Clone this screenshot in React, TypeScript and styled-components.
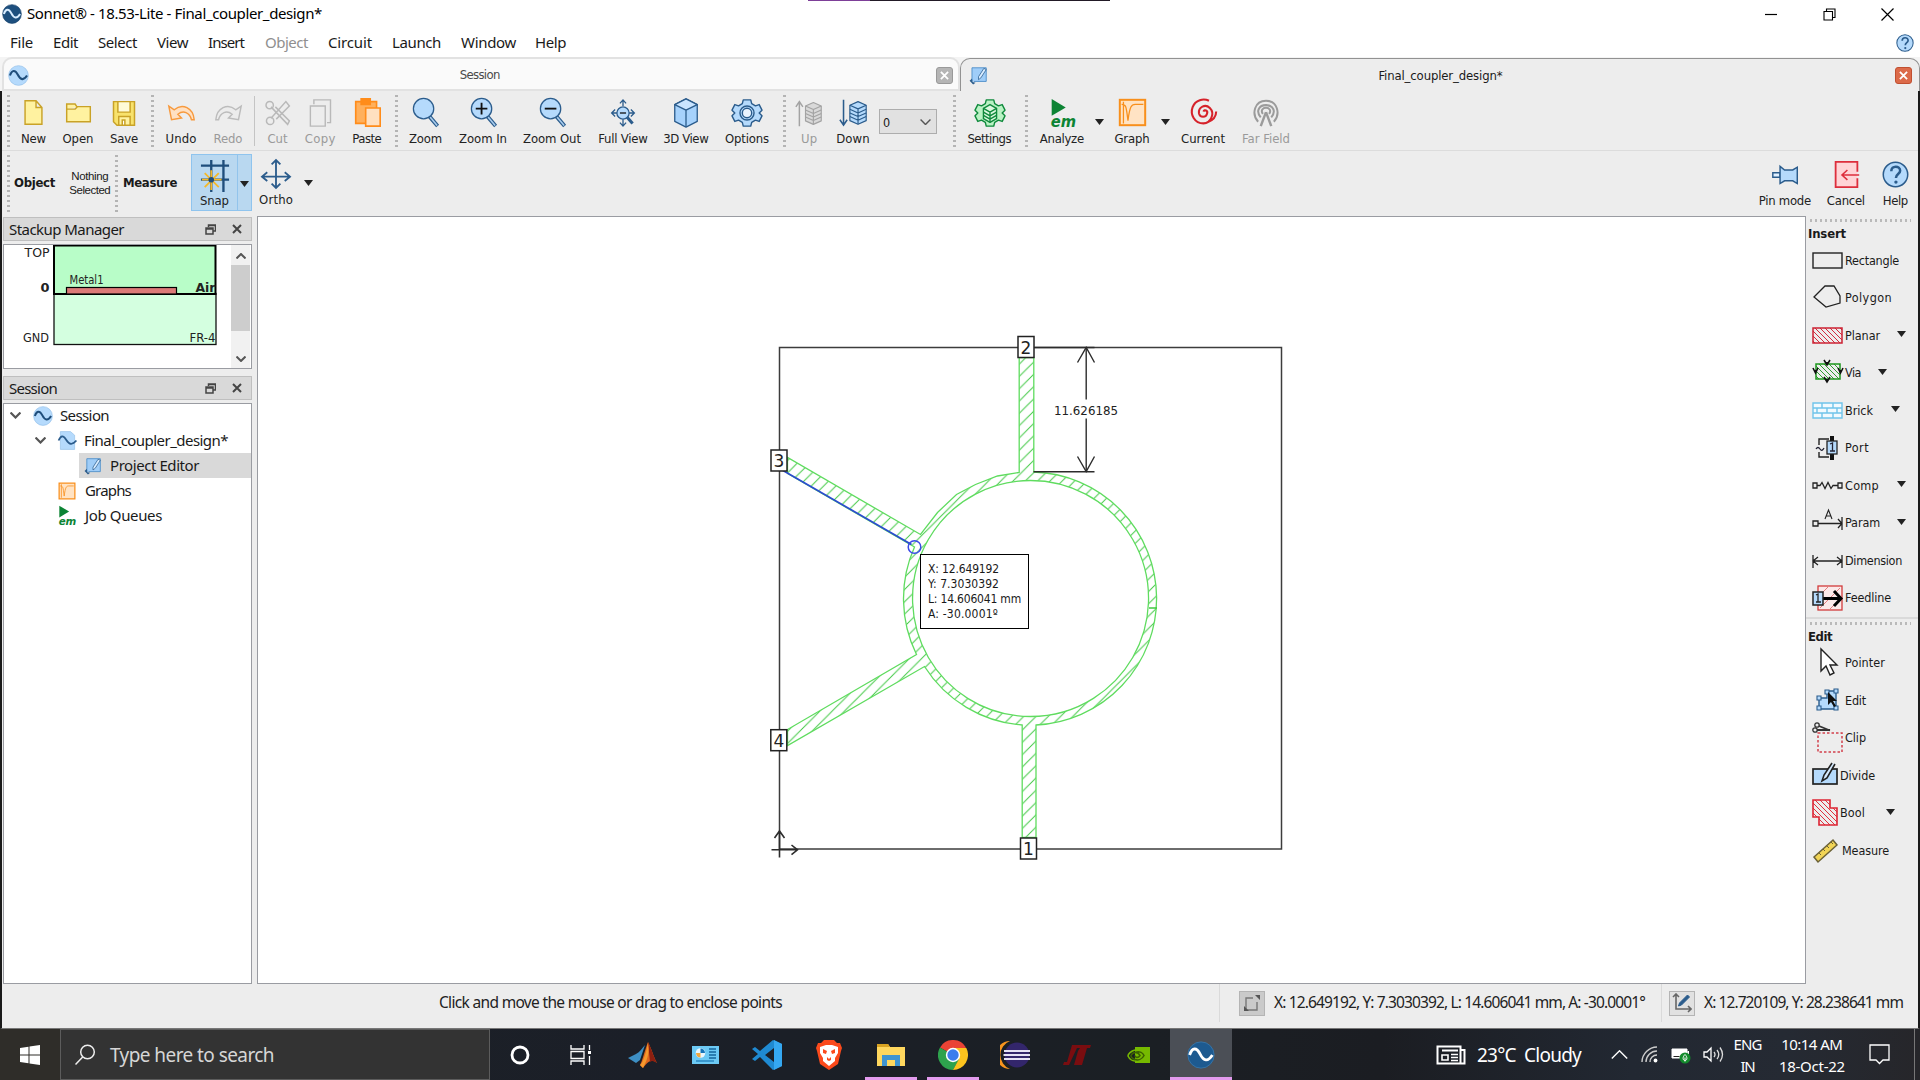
import React, { useLayoutEffect, useRef } from "react";
import styled, { createGlobalStyle, css } from "styled-components";

const UI = `"Noto Sans", "Open Sans", sans-serif`;
const TAHOMA = `"DejaVu Sans Condensed", "Noto Sans", sans-serif`;

const Global = createGlobalStyle`
  * { box-sizing: border-box; }
  html, body { margin: 0; padding: 0; background: #fff; }
  body { font-family: ${UI}; font-size: 15px; color: #1a1a1a; overflow: hidden; }
  svg { display: block; flex: none; }
`;

/* ---------- text ---------- */
const Glyphs = styled.span<{ $size?: number; $bold?: boolean; $color?: string; $font?: string }>`
  display: inline-block;
  white-space: pre;
  line-height: 1.2;
  padding-bottom: 2px;
  font-family: ${(p) => p.$font || UI};
  font-size: ${(p) => p.$size || 14}px;
  font-weight: ${(p) => (p.$bold ? 700 : 400)};
  ${(p) => p.$color && css`color: ${p.$color};`}
`;

type LabelProps = { w?: number; size?: number; bold?: boolean; color?: string; font?: string; children: string };

function Label({ w, size, bold, color, font, children }: LabelProps) {
  const ref = useRef<HTMLSpanElement>(null);
  useLayoutEffect(() => {
    const el = ref.current;
    if (!el || !w) return;
    el.style.letterSpacing = "0px";
    const natural = el.getBoundingClientRect().width;
    const gap = (w - natural) / children.length;
    el.style.letterSpacing = `${gap}px`;
    el.style.marginRight = `${-gap}px`;
  }, [w, children]);
  return (
    <Glyphs ref={ref} $size={size} $bold={bold} $color={color} $font={font}>
      {children}
    </Glyphs>
  );
}

/* ---------- icons ---------- */
const N = "#2b5c8c";
const B = "#b5dafc";
const Y = "#fff2a0";
const YS = "#c9a227";
const G = "#a3a3a3";
const GR = "#0f8a3c";

const gear =
  "M12 2h8l1 4 4 2.4 4-1.4 3 6-3 3 3 3-3 6-4-1.4-4 2.4-1 4h-8l-1-4-4-2.4-4 1.4-3-6 3-3-3-3 3-6 4 1.4 4-2.4z";

const Slabs = ({ s, f }: { s: string; f: string }) => (
  <g stroke={s} strokeWidth="1.3" strokeLinejoin="round">
    <path d="M12 8l9-4 9 4v17l-9 4-9-4z" fill={f} />
    <path d="M12 8l9 4 9-4M21 12v17M12 12.5l9 4 9-4M12 16.5l9 4 9-4M12 20.5l9 4 9-4" fill="none" />
  </g>
);
const Lens = () => (
  <g>
    <path d="M20 20l8.500 10" stroke={N} strokeWidth="4" />
    <path d="M20.500 20.500l7.500 9" stroke="#a9cdee" strokeWidth="1.600" />
    <circle cx="14" cy="12" r="10.500" fill={B} stroke={N} strokeWidth="1.300" />
  </g>
);
const Em = () => (
  <g fill="#0c8434">
    <path d="M5 1l15 9-15 9z" />
    <text x="4" y="31" fontFamily="DejaVu Sans, sans-serif" fontSize="16.500" fontWeight="700" fontStyle="italic" textLength="27" lengthAdjust="spacingAndGlyphs">em</text>
  </g>
);
const Wave = ({ f, s, r }: { f: string; s: string; r: string }) => (
  <g>
    <circle cx="16" cy="16" r="15" fill={f} stroke={r} />
    <path d="M3 16c3-9 8-9 12-1s9 9 14 1" fill="none" stroke={s} strokeWidth="3.200" />
  </g>
);
const Sketch = () => (
  <g>
    <path d="M5 26V3h24v23H8" fill="#9fcdf8" stroke="#4a8cc8" strokeWidth="1.500" />
    <path d="M25 4l4 2-9 14-4 3v-5z" fill="#d8ecff" stroke={N} strokeWidth="1.300" />
    <path d="M1 25l4-4 1 6 5 1-4 3z" fill={N} />
  </g>
);
const GraphIcon = () => (
  <g fill="none" stroke="#f88f1c">
    <rect x="2" y="2" width="28" height="28" fill="#ffe3c4" strokeWidth="2.200" />
    <path d="M4 7c5 0 5 2 7 18 2-16 4-18 8-18h9M6 4v24" strokeWidth="1.400" />
  </g>
);
const Question = () => (
  <g>
    <circle cx="16" cy="16" r="14.500" fill={B} stroke={N} strokeWidth="1.800" />
    <path d="M11 12c0-7 10.500-7 10.500-.5 0 4-5 4-5 8.500" fill="none" stroke={N} strokeWidth="3" />
    <circle cx="16.500" cy="25" r="2" fill={N} />
  </g>
);

const ICONS: Record<string, React.ReactNode> = {
  new: <path d="M6 2h13l7 8v20H6zM19 2v8h7" fill={Y} stroke={YS} strokeWidth="1.700" />,
  open: <path d="M2 27V6h10l2 3h16v18zM2 12h10l3-3" fill={Y} stroke={YS} strokeWidth="1.700" />,
  save: (
    <g stroke={YS} strokeWidth="1.700">
      <path d="M4 3h24v27H8l-4-4z" fill="#f8e26c" />
      <path d="M9 3h14v12H9z" fill="#fffbd8" />
      <path d="M10 30V20h13v10z" fill={Y} />
      <path d="M14 24h3v6h-3z" fill="#fff" />
    </g>
  ),
  undo: <path d="M2 9l3 15 11-2-4-4c6-5 13-2 15 6h3C29 11 17 5 8 13z" fill="#ffe0c2" stroke="#f79a3e" strokeWidth="1.600" />,
  redo: <path d="M30 9l-3 15-11-2 4-4C14 13 7 16 5 24H2C3 11 15 5 24 13z" fill="#ececec" stroke="#bcbcbc" strokeWidth="1.600" />,
  cut: (
    <g fill="none" stroke="#b9b9b9" strokeWidth="1.700">
      <path d="M8 22L25 3l4 5-15 15M8 9l19 20 2-4L13 9" />
      <circle cx="6.500" cy="7" r="4.200" />
      <circle cx="7" cy="25" r="4.200" />
    </g>
  ),
  copy: <path d="M5 8h17v23H5zM9 6V1h19v26h-4" fill="none" stroke="#b9b9b9" strokeWidth="1.600" />,
  paste: (
    <g stroke="#ff8c1a" strokeWidth="1.800">
      <path d="M3 4h23v24H3z" fill="#ffb05c" />
      <path d="M9 1h10v6H9z" fill="#ff8c1a" />
      <path d="M14 11h16v20H14z" fill="#ffe0c0" />
    </g>
  ),
  zoom: <Lens />,
  zoomIn: <g><Lens /><path d="M8 12h12M14 6v12" stroke="#111" strokeWidth="1.900" /></g>,
  zoomOut: <g><Lens /><path d="M8 12h12" stroke="#111" strokeWidth="1.900" /></g>,
  full: (
    <g fill="none" stroke={N} strokeWidth="1.500">
      <path d="M16 1v7M12.500 5L16 1l3.500 4M16 31v-8M12.500 27l3.500 4 3.500-4M3 16h6M7 12l-4 4 4 4M29 16h-6M25 12l4 4-4 4" />
      <path d="M20 20l7 8" strokeWidth="3.500" />
      <circle cx="16" cy="16" r="7" fill={B} />
      <path d="M12.500 16h7" stroke="#111" />
    </g>
  ),
  cube: (
    <g stroke={N} strokeWidth="1.400" strokeLinejoin="round">
      <path d="M4 7l12-6 12 6v18l-12 6-12-6z" fill="#a6d2fc" />
      <path d="M4 7l12-6 12 6-12 6z" fill="#c9e4ff" />
      <path d="M16 13v18" />
    </g>
  ),
  options: (
    <g stroke={N} strokeWidth="1.500">
      <path d={gear} fill={B} strokeLinejoin="round" />
      <circle cx="16" cy="16" r="7.500" fill={B} />
      <circle cx="16" cy="16" r="5" fill="#eaf4ff" />
    </g>
  ),
  up: <g><Slabs s={G} f="#d9d9d9" /><path d="M5 31V3M1 9l4-6 4 6" fill="none" stroke={G} strokeWidth="1.700" /></g>,
  down: <g><Slabs s={N} f={B} /><path d="M5 2v28M1 24l4 6 4-6" fill="none" stroke={N} strokeWidth="1.700" /></g>,
  settings: (
    <g stroke={GR} strokeWidth="1.500" strokeLinejoin="round">
      <path d={gear} fill="#b9f2c4" />
      <path d="M9 11l7-4 7 4v11l-7 4-7-4z" fill="#dbf8df" />
      <path d="M9 11l7 4 7-4M16 15v11M9 15l7 4 7-4M9 18.500l7 4 7-4" fill="none" />
    </g>
  ),
  em: <Em />,
  graph: <GraphIcon />,
  current: (
    <path
      d="M16 15c1-3 5-1 4 2-1 5-8 5-9 0-1-7 7-11 12-6 6 6 1 17-7 17C6 28 1 18 4 10 7 2 16 0 22 3M20 27c6-2 10-6 10-12"
      fill="none" stroke="#d6222a" strokeWidth="2.300"
    />
  ),
  far: (
    <g fill="none" stroke="#9b9b9b" strokeWidth="2.300">
      <path d="M7 26C-1 17 3 2 16 2s17 15 9 24M10 21C4 14 8 7 16 7s12 7 6 14" />
      <path d="M12.500 17c-3-4 0-7 3.500-7s6.500 3 3.500 7" />
      <path d="M16 15l-6 16M16 15l6 16" strokeWidth="2.800" />
    </g>
  ),
  snap: (
    <g fill="none">
      <path d="M1 6h30M1 21h30M12 0v34M25 0v34" stroke="#1f4e7c" strokeWidth="2.500" />
      <path d="M12 11v21M2 21h21M5 14l15 15M20 14L5 29" stroke="#f5b929" strokeWidth="1.900" />
      <circle cx="12" cy="21" r="3" fill="#1f4e7c" />
    </g>
  ),
  ortho: <path d="M16 0v32M11 5l5-5 5 5M11 27l5 5 5-5M1 19h30M6 14l-6 5 6 5M26 14l6 5-6 5" fill="none" stroke={N} strokeWidth="2.100" />,
  pin: (
    <g stroke={N} strokeWidth="1.600">
      <path d="M2 14h8v5H2z" fill="#e0f0ff" />
      <path d="M10 7l5 4h9l5-3v18l-5-3h-9l-5 3z" fill={B} />
    </g>
  ),
  cancel: (
    <g fill="none" stroke="#dd2e3c" strokeWidth="2">
      <path d="M28 13V2H4v28h24V20" fill="#ffd4d6" />
      <path d="M12 16.500h18M17 11l-6 5.500 6 5.500" strokeWidth="1.700" />
    </g>
  ),
  help: <Question />,
  wave: <Wave f={B} s="#1f4e7c" r="#8fbde8" />,
  logo: <Wave f="#1d4f7e" s="#d8ecff" r="#17406a" />,
  doc: (
    <g>
      <path d="M4 1h17l7 6v24H4z" fill="#b5dafc" stroke="#8dbce6" />
      <path d="M1 16c4-9 8-9 13-1s10 9 17 1" fill="none" stroke={N} strokeWidth="3" />
    </g>
  ),
  sketch: <Sketch />,
};

const Icon = ({ name, size = 32 }: { name: string; size?: number }) => (
  <svg width={size} height={size} viewBox="0 0 32 32" overflow="visible">{ICONS[name]}</svg>
);

const Caret = () => (
  <svg width="9" height="6" viewBox="0 0 9 6"><path d="M0 0h9L4.500 6z" fill="#222" /></svg>
);

/* ---------- frame ---------- */
const Screen = styled.div`
  width: 1920px; height: 1080px; display: flex; flex-direction: column; overflow: hidden; background: #ededed;
`;
const TitleBar = styled.header`
  height: 30px; flex: none; display: flex; align-items: center; background: #fff; padding: 0 26px 2px 2px; gap: 5px;
`;
const ShareHint = styled.div`
  position: absolute; top: 0; left: 808px; width: 302px; height: 1px;
  background: linear-gradient(90deg, #7d3f98 0 62px, #221a26 62px);
`;
const WindowButtons = styled.div`
  margin-left: auto; display: flex; gap: 45.5px; align-items: center; color: #000;
`;
const MenuBar = styled.nav`
  height: 27px; flex: none; display: flex; align-items: center; background: #fff; padding: 0 6px 2px 10px;
`;
const MenuItem = styled.div<{ $step: number }>`
  width: ${(p) => p.$step}px; flex: none; display: flex;
`;
const Push = styled.div`margin-left: auto; display: flex;`;
const TabRow = styled.div`
  height: 34px; flex: none; display: flex; background: #f4f4f4; padding-left: 2px;
  span { padding: 0; }
`;
const Tab = styled.div<{ $active?: boolean }>`
  display: flex; align-items: center; border-radius: 10px 10px 0 0;
  ${(p) => p.$active
    ? css`flex: 1; padding: 1px 7px 0 8px; background: #ededed; border: 1.5px solid #929292; border-bottom: 0; margin-top: 1px;`
    : css`width: 958px; padding: 2px 5px 0 4px; background: #fafafa; border: 2px solid #e2e2e2;`}
`;
const TabName = styled.div<{ $pr?: number }>`
  flex: 1; display: flex; justify-content: center; padding-right: ${(p) => p.$pr ?? 0}px;
`;
const TabClose = styled.div<{ $hot?: boolean }>`
  width: 17px; height: 17px; border-radius: 3px; display: grid; place-items: center;
  background: ${(p) => (p.$hot ? "#dc6a49" : "#b5b5b5")};
  border: 1px solid ${(p) => (p.$hot ? "#c04f30" : "#999")};
`;
const AppBody = styled.div`
  flex: 1; min-height: 0; display: flex; flex-direction: column;
  border-left: 2px solid #1a1a1a; border-right: 2px solid #1a1a1a; border-bottom: 1px solid #777;
`;

/* ---------- toolbars ---------- */
const Toolbar = styled.div`
  height: 60px; flex: none; display: flex; padding-left: 3px; border-bottom: 1.5px solid #dcdcdc;
`;
const Measurebar = styled(Toolbar)`height: 65px; border-bottom: 0;`;
const Grip = styled.div<{ $w: number }>`
  width: ${(p) => p.$w}px; flex: none; display: flex; justify-content: center;
  &::before {
    content: ""; width: 3px; margin: 4px 0 3px;
    background: repeating-linear-gradient(180deg, #b4b4b4 0 2px, transparent 2px 5px);
  }
`;
const Divider = styled.div`
  width: 8px; flex: none; display: flex; justify-content: center;
  &::before { content: ""; width: 1px; margin: 5px 0 4px; background: #c4c4c4; }
`;
const ToolButton = styled.div<{ $w: number; $off?: boolean; $top?: number }>`
  width: ${(p) => p.$w}px; flex: none; display: flex; flex-direction: column; align-items: center;
  padding-top: ${(p) => p.$top ?? 6}px; gap: 3px;
  color: ${(p) => (p.$off ? "#9a9a9a" : "#222")};
`;
const IconCell = styled.div`height: 31px; display: grid; place-items: center;`;
const CaretCell = styled.div<{ $w: number; $top?: number }>`
  width: ${(p) => p.$w}px; flex: none; display: flex; justify-content: center; padding-top: ${(p) => p.$top ?? 28}px;
`;
const Combo = styled.div`
  width: 58px; height: 25px; flex: none; margin: 18px 13px 0 3px; border: 1.5px solid #adadad; background: #e1e1e1;
  display: flex; align-items: center; justify-content: space-between; padding: 1px 5px 0 3px;
  span { padding: 0; }
`;
const Caption = styled.div<{ $w: number; $pad?: number }>`
  width: ${(p) => p.$w}px; flex: none; display: flex; flex-direction: column; justify-content: center;
  align-items: flex-start; padding-left: ${(p) => p.$pad ?? 0}px;
`;
const Nothing = styled(Caption)`align-items: center; span { padding: 0; }`;
const SnapBox = styled.div`
  width: 61px; height: 57px; flex: none; margin: 3px 0 0 9px; display: flex;
  background: #b9d8f0; border: 1.5px solid #8fc4ee;
`;
const SnapMore = styled.div`
  flex: 1; border-left: 1.5px solid #92c4ec; display: flex; justify-content: center; padding: 26px 1px 0 0;
`;

type Item =
  | { k: "grip"; w: number }
  | { k: "sep" }
  | { k: "combo" }
  | { k: "caret"; w: number }
  | { k: "tool"; icon: string; text: string; w: number; tw: number; off?: boolean; s?: number };

const tool = (icon: string, text: string, w: number, tw: number, s = 28, off = false): Item => ({ k: "tool", icon, text, w, tw, off, s });

const MAIN: Item[] = [
  { k: "grip", w: 6 },
  tool("new", "New", 45, 25, 27), tool("open", "Open", 44, 31, 27), tool("save", "Save", 48, 28, 28),
  { k: "grip", w: 8 },
  tool("undo", "Undo", 50, 31, 29), tool("redo", "Redo", 44, 29, 29, true),
  { k: "sep" },
  tool("cut", "Cut", 39, 20, 28, true), tool("copy", "Copy", 46, 31, 28, true), tool("paste", "Paste", 48, 29, 29),
  { k: "grip", w: 10 },
  tool("zoom", "Zoom", 49, 33, 31), tool("zoomIn", "Zoom In", 66, 48, 31), tool("zoomOut", "Zoom Out", 72, 58, 31),
  tool("full", "Full View", 70, 49.5, 28), tool("cube", "3D View", 56, 45, 30), tool("options", "Options", 66, 44, 30),
  { k: "grip", w: 8 },
  tool("up", "Up", 42, 16.5, 28, true), tool("down", "Down", 46, 33.5, 29),
  { k: "combo" },
  { k: "grip", w: 8 },
  tool("settings", "Settings", 63, 43.5, 30),
  { k: "grip", w: 10 },
  tool("em", "Analyze", 62, 44, 30), { k: "caret", w: 12 },
  tool("graph", "Graph", 54, 35, 29), { k: "caret", w: 12 },
  tool("current", "Current", 64, 44, 29), tool("far", "Far Field", 62, 48, 28, true),
];

const MENUS: [string, number, number][] = [
  ["File", 43, 23], ["Edit", 45, 25], ["Select", 59, 39], ["View", 51, 31], ["Insert", 57, 36],
  ["Object", 63, 43], ["Circuit", 64, 44], ["Launch", 69, 49], ["Window", 74, 55], ["Help", 60, 31],
];

/* ---------- left docks ---------- */
const Work = styled.main`flex: 1; min-height: 0; display: flex; padding-left: 1px;`;
const LeftDock = styled.aside`width: 249px; flex: none; display: flex; flex-direction: column;`;
const DockHead = styled.div<{ $mt?: number }>`
  height: 24px; flex: none; margin-top: ${(p) => p.$mt ?? 0}px; margin-bottom: 3px; padding: 0 9px 0 5px;
  display: flex; align-items: center; background: #d9d9d9; border: 1px solid #bfbfbf;
  span { padding: 0; }
`;
const DockButtons = styled.div`margin-left: auto; display: flex; gap: 16px;`;
const StackBox = styled.div`
  height: 125px; flex: none; display: flex; background: #fff; border: 1.5px solid #9a9ca2; overflow: hidden;
`;
const ScrollTrack = styled.div`
  width: 19px; margin: 0 1px 0 auto; background: #f1f1f1; display: flex; flex-direction: column; align-items: center;
  justify-content: space-between; padding: 8px 0 6px;
`;
const ScrollThumb = styled.div`width: 19px; height: 66px; background: #cdcdcd; margin-bottom: 19px;`;
const TreeBox = styled.div`flex: 1; background: #fff; border: 1.5px solid #9a9ca2;`;
const TreeRow = styled.div<{ $indent: number }>`
  height: 25px; padding-left: ${(p) => p.$indent}px; display: flex; align-items: center;
  &:first-child { margin-top: -1px; }
`;
const TreePick = styled.div<{ $on?: boolean; $gap?: number }>`
  height: 25px; flex: 1; display: flex; align-items: center; gap: ${(p) => p.$gap ?? 9}px; padding-left: 5px;
  background: ${(p) => (p.$on ? "#d9d9d9" : "transparent")};
`;
const Twist = styled.div`width: 18px; display: flex;`;

/* ---------- canvas ---------- */
const Canvas = styled.section`
  width: 1549px; margin-left: 5px; flex: none; background: #fff; border: 1.5px solid #9a9ca2; position: relative; overflow: hidden;
`;
const Readout = styled.div`
  position: absolute; left: 662px; top: 337px; width: 109px; height: 75px; background: #fff; border: 1.500px solid #000;
  padding: 7px 0 0 7px; display: flex; flex-direction: column; align-items: flex-start;
`;
const ReadoutLine = styled.div`height: 15px; display: flex; align-items: center; span { padding: 0; }`;

/* ---------- right dock ---------- */
const RightDock = styled.aside`flex: 1; display: flex; flex-direction: column; padding: 3px 0 0 2px;`;
const DotRow = styled.div<{ $mt?: number }>`
  height: 3px; margin: ${(p) => p.$mt ?? 0}px 7px 0 2px; flex: none;
  background: repeating-linear-gradient(90deg, #b9b9b9 0 2px, transparent 2px 5px);
`;
const GroupName = styled.div`height: 20px; display: flex; align-items: center; padding-top: 6px;`;
const SideRow = styled.div<{ $gap?: number }>`
  height: 37.5px; display: flex; align-items: center; padding-left: 4px; gap: ${(p) => p.$gap ?? 2}px;
  span { padding-bottom: 1px; }
`;
const SideCaret = styled.div<{ $ml: number }>`margin-left: ${(p) => p.$ml}px; padding-bottom: 3px;`;
const GroupRule = styled.div`height: 1.5px; background: #dadada; margin-left: -2px; flex: none;`;

const Hatch = ({ c, id }: { c: string; id: string }) => (
  <pattern id={id} width="5" height="5" patternUnits="userSpaceOnUse">
    <path d="M-1-1l7 7M4-1l2 2M-1 4l2 2" stroke={c} strokeWidth="1" />
  </pattern>
);

const SIDE: Record<string, React.ReactNode> = {
  Rectangle: <rect x="1" y="8" width="29" height="15" fill="none" stroke="#222" strokeWidth="1.400" />,
  Polygon: <path d="M2 15L13 4h9l6 10v7l-14 4z" fill="none" stroke="#222" strokeWidth="1.300" />,
  Planar: <g><Hatch id="hr" c="#d42a3a" /><rect x="1" y="8" width="29" height="15" fill="url(#hr)" stroke="#cc2233" strokeWidth="1.500" /></g>,
  Via: (
    <g>
      <Hatch id="hg" c="#2f9a2f" />
      <rect x="4" y="7" width="24" height="15" fill="url(#hg)" stroke="#1c961c" strokeWidth="1.500" />
      <path d="M12 3l3 5 3-5M15 5v4M1 11l2.500 5 2.500-5M3.500 13v4M26 11l2.500 5 2.500-5M28.500 13v4M12 20l3 5 3-5M15 22v4" fill="none" stroke="#111" strokeWidth="1.600" />
    </g>
  ),
  Brick: <path d="M1 8h29v15H1zM1 13h29M1 18h29M10 8v5M21 8v5M15 13v5M5 13v5M25 13v5M10 18v5M21 18v5" fill="#f2fafe" stroke="#70c4ea" strokeWidth="1.400" />,
  Port: (
    <g>
      <path d="M17 7H7v6M7 20v5h10" fill="none" stroke="#222" strokeWidth="1.400" />
      <path d="M18 4h4v24h-4z" fill="#111" />
      <rect x="15" y="9" width="10" height="13" fill={B} stroke="#222" strokeWidth="1.300" />
      <path d="M18 12l2.500-1v8M18 19h5M4 17q2-3 4 0t4-1" fill="none" stroke="#223" strokeWidth="1.300" />
    </g>
  ),
  Comp: <path d="M1 13h4v5H1zM26 13h4v5h-4zM5 15.500h3l2-3 3 6 3-6 3 6 2-3h5" fill="none" stroke="#222" strokeWidth="1.300" />,
  Param: (
    <g fill="none" stroke="#222" strokeWidth="1.300">
      <path d="M1 14h5v5H1zM6 16.500h24M26 12l4 4.500-4 4.500M30 10v13" />
      <path d="M13 12l3.500-9 3.500 9M14.200 9h4.600" strokeWidth="1.100" />
    </g>
  ),
  Dimension: <path d="M1 10v13M30 10v13M1 16h29M6 12l-5 4 5 4M25 12l5 4-5 4" fill="none" stroke="#222" strokeWidth="1.300" />,
  Feedline: (
    <g>
      <rect x="6" y="4" width="24" height="24" fill="#fbe9e9" stroke="#d23b3b" strokeWidth="1.300" />
      <path d="M8 26L28 6M17 28l13-13M6 15L17 4" stroke="#e08080" />
      <path d="M11 16.500h18M22 9l7 7.500-7 7.500" fill="none" stroke="#000" strokeWidth="3" />
      <rect x="1" y="10" width="10" height="13" fill={B} stroke="#222" strokeWidth="1.500" />
      <path d="M4 13l2-1v8M4 20h5" fill="none" stroke="#222" strokeWidth="1.300" />
    </g>
  ),
  Pointer: <path d="M9 2v22l5-5 4 9 4-2-4-8h7z" fill="#fff" stroke="#222" strokeWidth="1.400" />,
  Edit: (
    <g>
      <path d="M7 13h8V6h9v18H7z" fill={B} stroke={N} strokeWidth="1.400" />
      <path d="M5 11h4v4H5zM13 5h4v4h-4zM22 4h4v4h-4zM22 21h4v4h-4zM5 21h4v4H5z" fill={B} stroke={N} strokeWidth="1.100" />
      <path d="M16 7v13l3-3 3 5 2-1-3-5h4z" fill="#111" />
    </g>
  ),
  Clip: (
    <g fill="none">
      <rect x="6" y="11" width="24" height="19" stroke="#d2404c" strokeWidth="1.500" strokeDasharray="2.500 2" />
      <g stroke="#333" strokeWidth="1.300">
        <circle cx="5" cy="3" r="2.200" /><circle cx="3" cy="8" r="2.200" />
        <path d="M7 4l11 4.500M5 8h13" strokeWidth="1.800" />
      </g>
    </g>
  ),
  Divide: (
    <g>
      <rect x="1" y="9" width="24" height="15" fill={B} stroke="#222" strokeWidth="1.700" />
      <path d="M20 3l-8 12-2 6 5-3 8-14" fill="#d5eaff" stroke="#222" strokeWidth="1.600" />
    </g>
  ),
  Bool: <g><Hatch id="hb" c="#e02f3e" /><path d="M1 3h17v8h7v17H7v-8H1z" fill="url(#hb)" stroke="#dd2433" strokeWidth="1.600" /></g>,
  Measure: (
    <g>
      <path d="M2 22L21 5l4 5L6 27z" fill="#f1d455" stroke="#6b6136" strokeWidth="1.500" />
      <path d="M7 18l2 2M11 14l2 2M15 11l2 2M19 7l2 2" stroke="#6b6136" />
    </g>
  ),
};
const INSERT: [string, number, number?][] = [
  ["Rectangle", 54], ["Polygon", 47], ["Planar", 35, 15], ["Via", 16, 15], ["Brick", 28, 16], ["Port", 24],
  ["Comp", 34, 16], ["Param", 35, 15], ["Dimension", 57], ["Feedline", 46],
];
const EDIT: [string, number, number?][] = [
  ["Pointer", 40], ["Edit", 21], ["Clip", 21], ["Divide", 35], ["Bool", 25, 21], ["Measure", 47],
];

/* ---------- status ---------- */
const Status = styled.footer`height: 44px; flex: none; display: flex; align-items: stretch; padding-bottom: 6px; color: #222;`;
const StatusHint = styled.div`width: 1217px; display: flex; align-items: center; padding-left: 437px;`;
const StatusCell = styled.div<{ $w?: number }>`
  ${(p) => (p.$w ? css`width: ${p.$w}px;` : css`flex: 1;`)}
  border-left: 1.5px solid #dadada; display: flex; align-items: center; gap: 9px;
`;
const StatusIcon = styled.div<{ $on?: boolean; $ml: number }>`
  width: 26px; height: 25px; margin-left: ${(p) => p.$ml}px; display: grid; place-items: center;
  background: ${(p) => (p.$on ? "#cacaca" : "#e1e1e1")}; border: 1px solid #b4b4b4;
`;

/* ---------- taskbar ---------- */
const Taskbar = styled.div`
  height: 51px; flex: none; display: flex; color: #fff;
  background: linear-gradient(90deg, #1d2125 0, #1b1f28 34%, #1b1f24 60%, #1b1d22 72%, #222832 85%, #252a33 93%, #26262a 100%);
  span { padding: 1px 0 0; }
`;
const Start = styled.div`width: 60px; display: grid; place-items: center; background: #2f2d29;`;
const Search = styled.div`
  width: 430px; background: #333; border: 1px solid #5c5c5c; display: flex; align-items: center; padding-left: 13px; gap: 14px;
`;
const Task = styled.div<{ $w: number; $run?: boolean; $front?: boolean }>`
  width: ${(p) => p.$w}px; flex: none; display: grid; place-items: center; position: relative;
  ${(p) => p.$front && css`background: #4b4f56;`}
  ${(p) => (p.$run || p.$front) && css`
    &::after {
      content: ""; position: absolute; bottom: 0; height: 3px; background: #e39bee;
      left: ${p.$front ? 0 : 5}px; right: ${p.$front ? 0 : 5}px;
    }`}
`;
const Weather = styled.div`margin-left: 204px; width: 175px; display: flex; align-items: center; gap: 11px;`;
const Tray = styled.div`width: 110px; display: flex; align-items: center; gap: 13px;`;
const Clock = styled.div<{ $w: number }>`
  width: ${(p) => p.$w}px; display: flex; flex-direction: column; align-items: center; justify-content: center;
  row-gap: 3px;
`;
const Bell = styled.div`flex: 1; display: flex; align-items: center; justify-content: center; border-right: 1px solid #777; margin-right: 5px; padding-right: 5px;`;

const TASKS: { w: number; run?: boolean; front?: boolean; art: React.ReactNode }[] = [
  { w: 60, art: <svg width="20" height="20"><circle cx="10" cy="10" r="8" fill="none" stroke="#fff" strokeWidth="2.800" /></svg> },
  { w: 62, art: (
    <svg width="22" height="20"><path d="M1 0v4h13V0M1 20v-4h13v4M1 6.500h13v7H1zM19.500 0v5M19.500 11v9" fill="none" stroke="#fff" strokeWidth="1.300" /><path d="M18 6h3v3h-3z" fill="#fff" /></svg>
  ) },
  { w: 62, art: (
    <svg width="30" height="28" viewBox="0 0 30 28">
      <path d="M0 17l8-4c4-2 6-6 9-9l-5 15-4 3z" fill="#3d8fc4" />
      <path d="M12 24c2-3 4-12 8-23 4 8 6 16 9 21-5-4-8-3-14 5z" fill="#e0661e" />
      <path d="M20 1c4 8 6 16 9 21-3-2-5-3-7-1z" fill="#8c1f10" />
      <path d="M12 24c3-2 6-12 8-22 1 8 1 14-5 25z" fill="#f59a2e" />
    </svg>
  ) },
  { w: 62, art: (
    <svg width="27" height="18"><rect width="27" height="18" fill="#6cc9f4" /><circle cx="8.500" cy="7" r="4.800" fill="#e8f6fd" /><path d="M8.500 7V2.500A4.500 4.500 0 0 1 13 7z" fill="#1674b8" /><path d="M8.500 7v4.500A4.500 4.500 0 0 1 4 7z" fill="#f0a840" /><path d="M17 3h7M17 6h7M17 9h7M17 12h7" stroke="#14659c" strokeWidth="1.500" /><path d="M4 15h18" stroke="#2a86c0" strokeWidth="1.500" /></svg>
  ) },
  { w: 62, art: (
    <svg width="30" height="30" viewBox="0 0 30 30"><path d="M21 0l9 4v22l-9 4L8 17l-5 4-3-2 6-5-6-5 3-2 5 4zM22 8l-9 7 9 7z" fill="#1f8ad2" fillRule="evenodd" /><path d="M22 0l8 4v22l-8 4z" fill="#35a8f2" /></svg>
  ) },
  { w: 62, art: (
    <svg width="26" height="30" viewBox="0 0 26 30"><path d="M8 0h10l3 3 3 0 2 5-1 3-3 13-9 6-9-6L1 11 0 8l2-5h3z" fill="#fb4a1c" /><path d="M4 7l6-2h6l6 2 0 6-3 5 0 3-6 5-6-5 0-3-3-5z" fill="#fff" /><path d="M7 9l4 2-1 3-3-1zM19 9l-4 2 1 3 3-1zM11 17l2 2 2-2v3l-2 1-2-1z" fill="#fb4a1c" /></svg>
  ) },
  { w: 62, run: true, art: (
    <svg width="28" height="24" viewBox="0 0 28 24"><path d="M0 1h11l2 3h15v19H0z" fill="#ffd75e" /><path d="M0 1h11l2 3H0z" fill="#d9a322" /><path d="M5 23V12h18v11h-5v-6h-8v6z" fill="#3f94d1" /></svg>
  ) },
  { w: 62, run: true, art: (
    <svg width="30" height="30" viewBox="0 0 30 30"><path d="M15 15L2 7.500A15 15 0 0 1 28 7.500z" fill="#ea4335" /><path d="M15 15l6.500 3.800L15 30A15 15 0 0 1 2 7.500z" fill="#2ea24d" /><path d="M15 8h13.300A15 15 0 0 1 15 30l6-11z" fill="#fcc31e" /><circle cx="15" cy="15" r="7.200" fill="#fff" /><circle cx="15" cy="15" r="5.700" fill="#3b7ded" /></svg>
  ) },
  { w: 62, art: (
    <svg width="30" height="28" viewBox="0 0 30 28"><path d="M10 0a14 14 0 0 0 0 28A15 15 0 0 1 10 0z" fill="#f7941e" /><circle cx="17" cy="14" r="12.500" fill="#33266b" /><path d="M4 10h26M3.500 14h26.500M4 18h26" stroke="#e6e3f4" strokeWidth="2.200" /></svg>
  ) },
  { w: 62, art: (
    <svg width="28" height="22" viewBox="0 0 28 22"><path d="M9 1h19l-1 3h-3l-5 17h-8l4-14 2-3h-3L6 21H0l1-3h3z" fill="#7a0d10" /></svg>
  ) },
  { w: 62, art: (
    <svg width="24" height="18" viewBox="0 0 24 18"><path d="M8 1h15v16H8z" fill="#76b900" /><path d="M8 4C4 5 1 8 1 10c2 4 5 5 7 5" fill="none" stroke="#76b900" strokeWidth="1.600" /><path d="M8 6.500c5-2 8 1 9 3-2 4-6 5-9 4-3-1-4-3-4-4 2-4 7-4 9 0-2 3-5 2-5 0" fill="none" stroke="#3b6100" strokeWidth="1.600" /></svg>
  ) },
  { w: 62, front: true, art: (
    <svg width="28" height="28" viewBox="0 0 32 32"><Wave f="#1d5a90" s="#fff" r="#3677ad" /></svg>
  ) },
];

const Float = () => (
  <svg width="11" height="11"><path d="M3.500 3V1h7v6h-2M1 4h7v6H1zM1 5h7M3.500 1.500h7" fill="none" stroke="#444" strokeWidth="1.500" /></svg>
);
const Shut = ({ c = "#444", s = 10, w = 2 }: { c?: string; s?: number; w?: number }) => (
  <svg width={s} height={s} viewBox="0 0 10 10"><path d="M1 1l8 8M9 1L1 9" stroke={c} strokeWidth={w} /></svg>
);
const Chevron = ({ up = false, w = 10, sw = 2 }: { up?: boolean; w?: number; sw?: number }) => (
  <svg width={w} height={w * 0.6} viewBox="0 0 10 6"><path d={up ? "M.5 5.500L5 1l4.500 4.500" : "M.5.5L5 5 9.500.5"} fill="none" stroke="#555" strokeWidth={sw} /></svg>
);

const Stackup = () => (
  <svg width="224" height="122" viewBox="4.500 245 224 122" fontFamily="DejaVu Sans, sans-serif" fontSize="12.500" fill="#222">
    <rect x="54.500" y="293.500" width="162" height="51" fill="#d4ffe0" stroke="#111" strokeWidth="1.300" />
    <rect x="54.500" y="245.500" width="161.500" height="48.500" fill="#b8fdc8" stroke="#000" strokeWidth="2" />
    <rect x="67" y="287.500" width="110" height="6.500" fill="#dc7a78" stroke="#000" strokeWidth="1.200" />
    <text x="25" y="256.500" textLength="25" lengthAdjust="spacingAndGlyphs">TOP</text>
    <text x="70" y="284" textLength="34" lengthAdjust="spacingAndGlyphs" fontSize="12">Metal1</text>
    <text x="41" y="292" fontWeight="700" textLength="9" lengthAdjust="spacingAndGlyphs">0</text>
    <text x="196" y="292" fontWeight="700" textLength="20" lengthAdjust="spacingAndGlyphs">Air</text>
    <text x="23.500" y="341.500" textLength="26" lengthAdjust="spacingAndGlyphs">GND</text>
    <text x="190" y="341.500" textLength="26" lengthAdjust="spacingAndGlyphs">FR-4</text>
  </svg>
);

const PORTS: [string, number, number][] = [["2", 1026.5, 347.5], ["3", 779.5, 461], ["4", 779.3, 740.7], ["1", 1029, 849]];

const OUTLINE =
  "M1034.300 358V472.500A126.600 126.600 0 0 1 1036.500 725.500V838L1022.700 838V725.500A126.600 126.600 0 0 1 925 667L788 746L788 730L917 655A126.600 126.600 0 0 1 915 547.500L788 474L788 458L921 535L938 513L957 495L976 485L998 476.500L1019.700 473V358Z";

const Drawing = () => (
  <svg width="1546" height="765" viewBox="258.500 217.500 1546 765" fontFamily="DejaVu Sans, sans-serif">
    <defs>
      <pattern id="metal" width="12.300" height="12.300" patternUnits="userSpaceOnUse" patternTransform="translate(6.800 0)">
        <path d="M-1 13.300L13.300-1M-1 1l2-2M11.300 13.300l2-2" stroke="#3fc842" strokeWidth="1" />
      </pattern>
    </defs>
    <rect x="780" y="348" width="502" height="501.500" fill="none" stroke="#3c3c3c" strokeWidth="1.500" />
    <path
      fillRule="evenodd" fill="url(#metal)" stroke="#5fdc5f" strokeWidth="1.300"
      d={`${OUTLINE}M1031 481A118 118 0 1 0 1031.100 481Z`}
    />
    <path d="M1149.500 608.500h8" stroke="#3fc83f" strokeWidth="1.500" />
    <path d="M780 469L912 545" stroke="#2b4bd0" strokeWidth="1.700" />
    <circle cx="915" cy="547.500" r="6.300" fill="none" stroke="#3b4be8" strokeWidth="1.500" />
    <g fill="none" stroke="#2c2c2c" strokeWidth="1.400">
      <path d="M1035 348h60M1034 472.300h61M1086.700 348v52M1086.700 419v53" />
      <path d="M1078 363l8.700-15 8.300 15M1078 457l8.700 15 8.300-15" />
      <path d="M772 850.300h26M792 845.500l6 4.800-6 4.800M780 858v-26M775 838.500l5-7 5 7" strokeWidth="1.600" />
    </g>
    <text x="1054.500" y="415" fontSize="13" textLength="64" lengthAdjust="spacingAndGlyphs" fill="#222">11.626185</text>
    {PORTS.map(([n, x, y]) => (
      <g key={n}>
        <rect x={x - 8} y={y - 10.500} width="16" height="21" fill="#fff" stroke="#222" strokeWidth="1.500" />
        <text x={x} y={y + 6.800} fontSize="17" textAnchor="middle" fill="#222">{n}</text>
      </g>
    ))}
  </svg>
);

const Side = ({ rows }: { rows: [string, number, number?][] }) => (
  <>
    {rows.map(([name, w, caret]) => {
      const compact = name === "Divide" || name === "Bool";
      return (
        <SideRow key={name} $gap={compact ? 0 : 2}>
          <svg width={compact || name === "Measure" ? 28 : 31} height="32" overflow="visible">{SIDE[name]}</svg>
          <Label w={w} size={12.5} font={TAHOMA}>{name}</Label>
          {caret !== undefined && <SideCaret $ml={caret}><Caret /></SideCaret>}
        </SideRow>
      );
    })}
  </>
);

export default function App() {
  return (
    <Screen>
      <Global />
      <TitleBar>
        <Icon name="logo" size={20} />
        <Label w={295} size={15} color="#000">Sonnet® - 18.53-Lite - Final_coupler_design*</Label>
        <WindowButtons>
          <svg width="12" height="12"><path d="M0 6.500h12" stroke="#000" strokeWidth="1.200" /></svg>
          <svg width="13" height="13"><path d="M1 3.500h8.500v8.500H1zM3.500 3.500V1H12v8.500H9.500" fill="none" stroke="#000" strokeWidth="1.100" /></svg>
          <svg width="13" height="13"><path d="M.5.5l12 12M12.500.5l-12 12" stroke="#000" strokeWidth="1.200" /></svg>
        </WindowButtons>
        <ShareHint />
      </TitleBar>
      <MenuBar>
        {MENUS.map(([t, step, w]) => (
          <MenuItem key={t} $step={step}>
            <Label w={w} size={15} color={t === "Object" ? "#8f8f8f" : "#1a1a1a"}>{t}</Label>
          </MenuItem>
        ))}
        <Push><Icon name="help" size={18} /></Push>
      </MenuBar>
      <TabRow>
        <Tab>
          <Icon name="wave" size={21} />
          <TabName $pr={5}><Label w={40} size={13} color="#4a4a4a" font={TAHOMA}>Session</Label></TabName>
          <TabClose><Shut c="#fff" s={9} /></TabClose>
        </Tab>
        <Tab $active>
          <Icon name="sketch" size={19} />
          <TabName $pr={2}><Label w={124} size={13} font={TAHOMA}>Final_coupler_design*</Label></TabName>
          <TabClose $hot><Shut c="#fff" s={9} /></TabClose>
        </Tab>
      </TabRow>
      <AppBody>
        <Toolbar>
          {MAIN.map((it, i) => {
            if (it.k === "grip") return <Grip key={i} $w={it.w} />;
            if (it.k === "sep") return <Divider key={i} />;
            if (it.k === "caret") return <CaretCell key={i} $w={it.w}><Caret /></CaretCell>;
            if (it.k === "combo")
              return <Combo key={i}><Label size={12.5} font={TAHOMA}>0</Label><Chevron sw={1.3} w={11} /></Combo>;
            return (
              <ToolButton key={i} $w={it.w} $off={it.off}>
                <IconCell><Icon name={it.icon} size={it.s} /></IconCell>
                <Label w={it.tw} size={13} font={TAHOMA}>{it.text}</Label>
              </ToolButton>
            );
          })}
        </Toolbar>
        <Measurebar>
          <Grip $w={6} />
          <Caption $w={58} $pad={3}><Label w={41} size={13} bold font={TAHOMA}>Object</Label></Caption>
          <Nothing $w={42}>
            <Label w={37} size={11.5} font="Liberation Sans, sans-serif">Nothing</Label>
            <Label w={41} size={11.5} font="Liberation Sans, sans-serif">Selected</Label>
          </Nothing>
          <Grip $w={10} />
          <Caption $w={61} $pad={2}><Label w={54} size={13} bold font={TAHOMA}>Measure</Label></Caption>
          <SnapBox>
            <ToolButton $w={45} $top={5}>
              <IconCell><Icon name="snap" size={30} /></IconCell>
              <Label w={29} size={13} font={TAHOMA}>Snap</Label>
            </ToolButton>
            <SnapMore><Caret /></SnapMore>
          </SnapBox>
          <ToolButton $w={48} $top={7}>
            <IconCell><Icon name="ortho" size={28} /></IconCell>
            <Label w={34} size={13} font={TAHOMA}>Ortho</Label>
          </ToolButton>
          <CaretCell $w={17} $top={29}><Caret /></CaretCell>
          <Push>
            <ToolButton $w={68} $top={8}><IconCell><Icon name="pin" size={29} /></IconCell><Label w={52} size={13} font={TAHOMA}>Pin mode</Label></ToolButton>
            <ToolButton $w={54} $top={8}><IconCell><Icon name="cancel" size={29} /></IconCell><Label w={38} size={13} font={TAHOMA}>Cancel</Label></ToolButton>
            <ToolButton $w={45} $top={8}><IconCell><Icon name="help" size={27} /></IconCell><Label w={25} size={13} font={TAHOMA}>Help</Label></ToolButton>
          </Push>
        </Measurebar>
        <Work>
          <LeftDock>
            <DockHead $mt={1}>
              <Label w={115} size={15}>Stackup Manager</Label>
              <DockButtons><Float /><Shut /></DockButtons>
            </DockHead>
            <StackBox>
              <Stackup />
              <ScrollTrack><Chevron up /><ScrollThumb /><Chevron /></ScrollTrack>
            </StackBox>
            <DockHead $mt={7}>
              <Label w={48} size={15}>Session</Label>
              <DockButtons><Float /><Shut /></DockButtons>
            </DockHead>
            <TreeBox>
              <TreeRow $indent={6}><Twist><Chevron w={11} /></Twist><TreePick $gap={7}><Icon name="wave" size={20} /><Label w={49} size={15}>Session</Label></TreePick></TreeRow>
              <TreeRow $indent={31}><Twist><Chevron w={11} /></Twist><TreePick $gap={7}><Icon name="doc" size={19} /><Label w={144} size={15}>Final_coupler_design*</Label></TreePick></TreeRow>
              <TreeRow $indent={75}><TreePick $on $gap={8}><Icon name="sketch" size={18} /><Label w={89} size={15}>Project Editor</Label></TreePick></TreeRow>
              <TreeRow $indent={49}><TreePick><Icon name="graph" size={18} /><Label w={46} size={15}>Graphs</Label></TreePick></TreeRow>
              <TreeRow $indent={47}><TreePick $gap={8}><Icon name="em" size={21} /><Label w={77} size={15}>Job Queues</Label></TreePick></TreeRow>
            </TreeBox>
          </LeftDock>
          <Canvas>
            <Drawing />
            <Readout>
              <ReadoutLine><Label w={71} size={12} font={TAHOMA}>X: 12.649192</Label></ReadoutLine>
              <ReadoutLine><Label w={71} size={12} font={TAHOMA}>Y: 7.3030392</Label></ReadoutLine>
              <ReadoutLine><Label w={93} size={12} font={TAHOMA}>L: 14.606041 mm</Label></ReadoutLine>
              <ReadoutLine><Label w={70} size={12} font={TAHOMA}>A: -30.0001º</Label></ReadoutLine>
            </Readout>
          </Canvas>
          <RightDock>
            <DotRow />
            <GroupName><Label w={38} size={13} bold font={TAHOMA}>Insert</Label></GroupName>
            <Side rows={INSERT} />
            <GroupRule />
            <DotRow $mt={3} />
            <GroupName><Label w={24} size={13} bold font={TAHOMA}>Edit</Label></GroupName>
            <Side rows={EDIT} />
          </RightDock>
        </Work>
        <Status>
          <StatusHint><Label w={343} size={15.5}>Click and move the mouse or drag to enclose points</Label></StatusHint>
          <StatusCell $w={442}>
            <StatusIcon $on $ml={19}>
              <svg width="18" height="16"><path d="M3 6v9h11V7M3 9V3h7" fill="none" stroke="#777" strokeWidth="1.400" /><path d="M12 0h5v5zM1 11v5h5z" fill="#555" /></svg>
            </StatusIcon>
            <Label w={371} size={15.5}>X: 12.649192, Y: 7.3030392, L: 14.606041 mm, A: -30.0001°</Label>
          </StatusCell>
          <StatusCell>
            <StatusIcon $ml={7}>
              <svg width="20" height="20"><path d="M4 1v15h15M1 4l3-3 3 3M16 13l3 3-3 3" fill="none" stroke="#666" strokeWidth="1.600" /><path d="M15.500 2l2 2-8 8-3 1 1-3z" fill={N} stroke={N} /></svg>
            </StatusIcon>
            <Label w={199} size={15.5}>X: 12.720109, Y: 28.238641 mm</Label>
          </StatusCell>
        </Status>
      </AppBody>
      <Taskbar>
        <Start>
          <svg width="20" height="20" viewBox="0 0 20 20"><path d="M0 3l8.500-1.300V9.500H0zM9.500 1.500L20 0v9.500H9.500zM0 10.500h8.500v7.800L0 17zM9.500 10.500H20V20L9.500 18.500z" fill="#fff" /></svg>
        </Start>
        <Search>
          <svg width="22" height="22"><circle cx="13.500" cy="8" r="6.800" fill="none" stroke="#eee" strokeWidth="1.500" /><path d="M8.700 13L1.500 20.500" stroke="#eee" strokeWidth="1.500" /></svg>
          <Label w={164} size={19} color="#d6d6d6">Type here to search</Label>
        </Search>
        {TASKS.map((t, i) => (
          <Task key={i} $w={t.w} $run={t.run} $front={t.front}>{t.art}</Task>
        ))}
        <Weather>
          <svg width="30" height="20"><path d="M1.500 1.500h23v17h-23zM25 5h3.500v13.500H24M6 5.500h16" fill="none" stroke="#fff" strokeWidth="2" /><path d="M6 10h6v5H6zM15 9.500h7M15 12.500h7M15 15.500h7" fill="none" stroke="#fff" strokeWidth="1.600" /></svg>
          <Label w={104} size={19}>23°C  Cloudy</Label>
        </Weather>
        <Tray>
          <svg width="17" height="9"><path d="M.8 8.500L8.500.8l7.700 7.700" fill="none" stroke="#fff" strokeWidth="1.400" /></svg>
          <svg width="17" height="17"><path d="M1 16C1 8 8 1 16 1M5 16C5 10 10 5 16 5M9 16c0-4 3-7 7-7" fill="none" stroke="#ccc" strokeWidth="1.400" /><circle cx="14.500" cy="14.500" r="1.900" fill="#fff" /></svg>
          <svg width="19" height="17" overflow="visible"><path d="M1 3h15v9H1z" fill="#fff" stroke="#fff" /><path d="M16.500 5h1.500v5h-1.500z" fill="#fff" /><path d="M2.500 10.500h6" stroke="#222" /><circle cx="14" cy="12" r="5.500" fill="#138a2c" /><path d="M14 8.500c-3 3-2 6 0 6s3-3 0-6zM14 11.500v4" fill="none" stroke="#fff" /></svg>
          <svg width="21" height="17"><path d="M1 6h3l4-4v13l-4-4H1z" fill="none" stroke="#fff" strokeWidth="1.300" /><path d="M11 6q2 2.500 0 5M14 4q3.500 4.500 0 9M17 1.500q5 7 0 14" fill="none" stroke="#ddd" strokeWidth="1.300" /></svg>
        </Tray>
        <Clock $w={54}><Label w={28} size={15}>ENG</Label><Label w={14} size={15}>IN</Label></Clock>
        <Clock $w={74}><Label w={61} size={15}>10:14 AM</Label><Label w={66} size={15}>18-Oct-22</Label></Clock>
        <Bell>
          <svg width="21" height="21"><path d="M1 1h19v15h-6l-3.500 3.500L7 16H1z" fill="none" stroke="#fff" strokeWidth="1.300" /></svg>
        </Bell>
      </Taskbar>
    </Screen>
  );
}
